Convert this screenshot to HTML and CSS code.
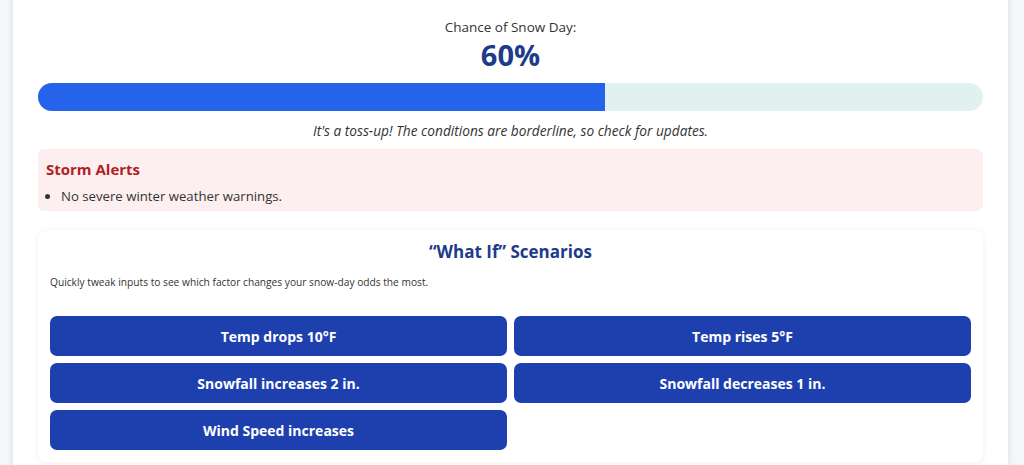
FILE: index.html
```html
<!DOCTYPE html>
<html lang="en">
<head>
    <meta charset="UTF-8">
    <meta name="viewport" content="width=device-width, initial-scale=1.0">
    <title>Snow Day Calculator</title>
    <link rel="stylesheet" href="styles.css">
</head>
<body>
    <div class="container">
        <div class="result">
            <p class="result-label">Chance of Snow Day:</p>
            <p class="result-value">60%</p>
            <div class="progress">
                <div class="progress-fill" style="width: 60%"></div>
            </div>
            <p class="result-note">It's a toss-up! The conditions are borderline, so check for updates.</p>
        </div>

        <div class="alerts">
            <h3>Storm Alerts</h3>
            <ul>
                <li>No severe winter weather warnings.</li>
            </ul>
        </div>

        <div class="scenarios">
            <h2>“What If” Scenarios</h2>
            <p class="scenarios-info">Quickly tweak inputs to see which factor changes your snow-day odds the most.</p>
            <div class="scenario-grid">
                <button>Temp drops 10°F</button>
                <button>Temp rises 5°F</button>
                <button>Snowfall increases 2 in.</button>
                <button>Snowfall decreases 1 in.</button>
                <button>Wind Speed increases</button>
            </div>
        </div>
    </div>
</body>
</html>
```

FILE: styles.css
```css
* {
    box-sizing: border-box;
}
body {
    margin: 0;
    background: #f5f6fa;
    font-family: 'Segoe UI', 'Open Sans', 'Noto Sans', sans-serif;
    color: #333;
}
.container {
    width: 995px;
    margin: -20px 0 0 13px;
    padding: 37px 25px 10px 25px;
    background: #fff;
    border-radius: 10px;
    box-shadow: 0 0 6px rgba(60, 70, 120, 0.15);
}
.result {
    text-align: center;

    p {
        margin: 0;
    }
}
.result-label {
    font-size: 13.5px;
    line-height: 20px;
}
.result-value {
    margin-top: 1px !important;
    font-size: 29px;
    font-weight: 700;
    line-height: 34px;
    color: #1e3a8a;
}
.progress {
    height: 28px;
    margin-top: 11px;
    border-radius: 14px;
    background: #e1f1ef;
    overflow: hidden;
}
.progress-fill {
    height: 100%;
    background: #2563eb;
}
.result-note {
    margin-top: 10px !important;
    font-size: 13.7px;
    font-style: italic;
    line-height: 20px;
}
.alerts {
    margin-top: 8px;
    padding: 9px 8px 5px 8px;
    background: #fdefef;
    border-radius: 6px;

    h3 {
        margin: 0;
        font-size: 15px;
        line-height: 22px;
        color: #b21f1f;
    }
    ul {
        margin: 6px 0 0 0;
        padding-left: 15px;
        font-size: 13.2px;
        line-height: 20px;
    }
}
.scenarios {
    margin-top: 19px;
    padding: 10px 12px 12px 12px;
    border-radius: 8px;
    box-shadow: 0 1px 6px rgba(0, 0, 0, 0.07);

    h2 {
        margin: 0;
        text-align: center;
        font-size: 17px;
        line-height: 24px;
        color: #1e3a8a;
    }
}
.scenarios-info {
    margin: 11px 0 27px 0;
    font-size: 10.2px;
    line-height: 14px;
}
.scenario-grid {
    display: grid;
    grid-template-columns: 1fr 1fr;
    gap: 7px 7px;

    button {
        height: 40px;
        border: none;
        border-radius: 7px;
        background: #1e40af;
        color: #fff;
        font-family: inherit;
        font-size: 14px;
        font-weight: 700;
    }
}
```
